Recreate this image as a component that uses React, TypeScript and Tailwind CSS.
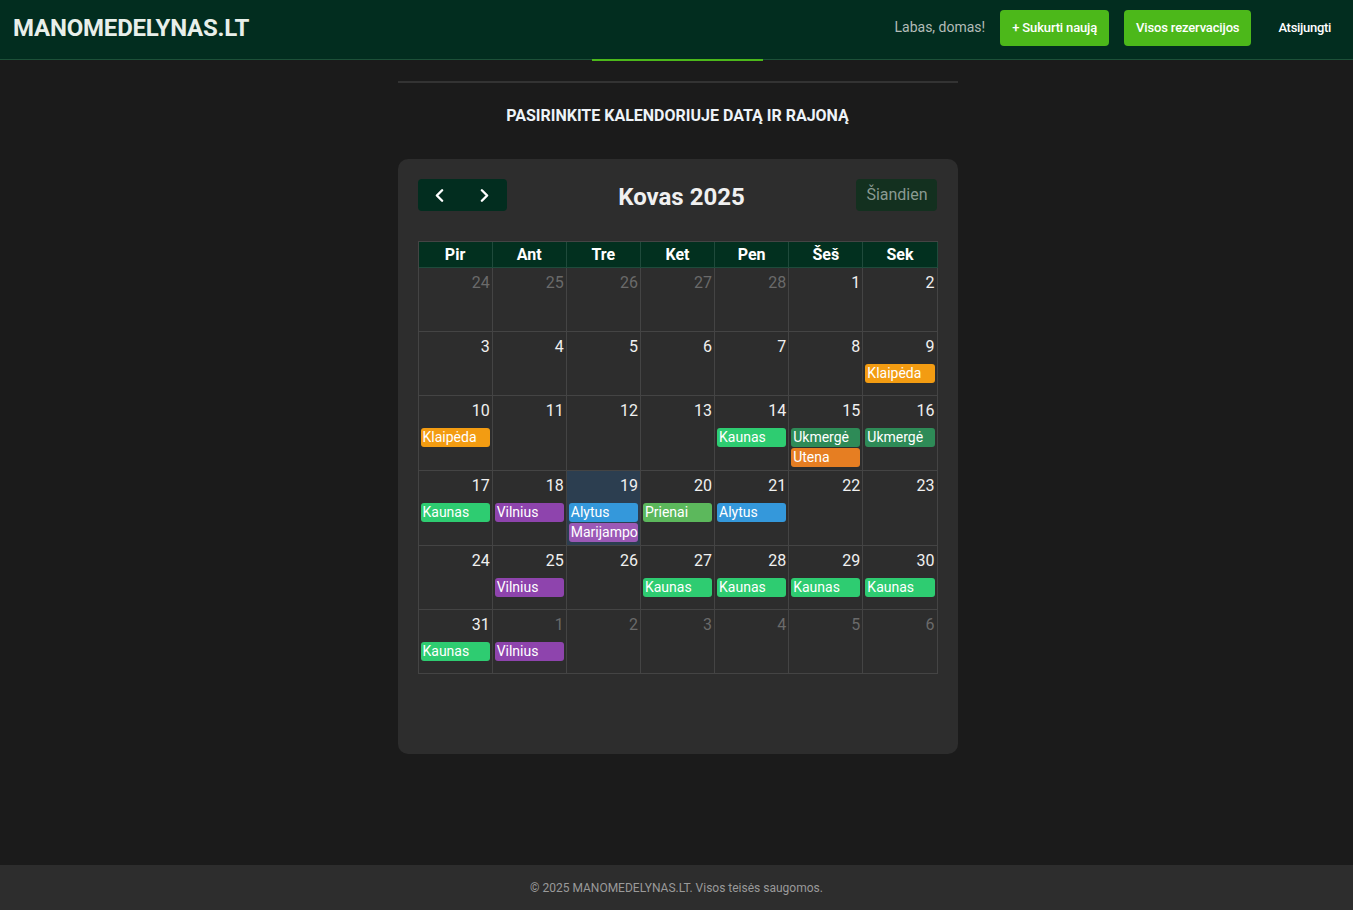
import { ChevronLeft, ChevronRight } from "lucide-react";

type Ev = { label: string; color: string };
type Day = { n: number; other?: boolean; today?: boolean; events?: Ev[] };

const KLAIPEDA = "bg-[#f39c12]";
const KAUNAS = "bg-[#2ecc71]";
const UKMERGE = "bg-[#2e8b57]";
const UTENA = "bg-[#e67e22]";
const VILNIUS = "bg-[#8e44ad]";
const ALYTUS = "bg-[#3498db]";
const PRIENAI = "bg-[#5cb85c]";
const MARIJAMPOLE = "bg-[#9b59b6]";

const weekdays = ["Pir", "Ant", "Tre", "Ket", "Pen", "Šeš", "Sek"];

const weeks: Day[][] = [
  [
    { n: 24, other: true },
    { n: 25, other: true },
    { n: 26, other: true },
    { n: 27, other: true },
    { n: 28, other: true },
    { n: 1 },
    { n: 2 },
  ],
  [
    { n: 3 },
    { n: 4 },
    { n: 5 },
    { n: 6 },
    { n: 7 },
    { n: 8 },
    { n: 9, events: [{ label: "Klaipėda", color: KLAIPEDA }] },
  ],
  [
    { n: 10, events: [{ label: "Klaipėda", color: KLAIPEDA }] },
    { n: 11 },
    { n: 12 },
    { n: 13 },
    { n: 14, events: [{ label: "Kaunas", color: KAUNAS }] },
    {
      n: 15,
      events: [
        { label: "Ukmergė", color: UKMERGE },
        { label: "Utena", color: UTENA },
      ],
    },
    { n: 16, events: [{ label: "Ukmergė", color: UKMERGE }] },
  ],
  [
    { n: 17, events: [{ label: "Kaunas", color: KAUNAS }] },
    { n: 18, events: [{ label: "Vilnius", color: VILNIUS }] },
    {
      n: 19,
      today: true,
      events: [
        { label: "Alytus", color: ALYTUS },
        { label: "Marijampolė", color: MARIJAMPOLE },
      ],
    },
    { n: 20, events: [{ label: "Prienai", color: PRIENAI }] },
    { n: 21, events: [{ label: "Alytus", color: ALYTUS }] },
    { n: 22 },
    { n: 23 },
  ],
  [
    { n: 24 },
    { n: 25, events: [{ label: "Vilnius", color: VILNIUS }] },
    { n: 26 },
    { n: 27, events: [{ label: "Kaunas", color: KAUNAS }] },
    { n: 28, events: [{ label: "Kaunas", color: KAUNAS }] },
    { n: 29, events: [{ label: "Kaunas", color: KAUNAS }] },
    { n: 30, events: [{ label: "Kaunas", color: KAUNAS }] },
  ],
  [
    { n: 31, events: [{ label: "Kaunas", color: KAUNAS }] },
    { n: 1, other: true, events: [{ label: "Vilnius", color: VILNIUS }] },
    { n: 2, other: true },
    { n: 3, other: true },
    { n: 4, other: true },
    { n: 5, other: true },
    { n: 6, other: true },
  ],
];

function DayCell({ day }: { day: Day }) {
  return (
    <div
      className={`min-h-[64px] border-r border-b border-[#444] pb-[3px] ${
        day.today ? "bg-[#2c3e50]" : ""
      }`}
    >
      <div
        className={`h-[32px] pt-[3px] pr-[2px] text-right text-[16px] leading-[24px] ${
          day.other ? "text-[#6a6a6a]" : "text-[#f0f0f0]"
        }`}
      >
        {day.n}
      </div>
      <div className="flex flex-col gap-px px-[2px]">
        {day.events?.map((ev, i) => (
          <div
            key={i}
            className={`${ev.color} h-[19px] overflow-hidden whitespace-nowrap rounded-[3px] pl-[2px] text-[14px] leading-[19px] text-white`}
          >
            {ev.label}
          </div>
        ))}
      </div>
    </div>
  );
}

export default function App() {
  return (
    <div className="flex min-h-[910px] flex-col bg-[#1b1b1b] font-['Roboto',sans-serif]">
      <header className="flex h-[60px] items-center justify-between border-b border-[#1d5038] bg-[#022d1f] pb-[4px] pl-[13px] pr-[22px]">
        <div className="text-[24px] font-bold tracking-[-0.2px] text-[#e8efea]">
          MANOMEDELYNAS.LT
        </div>
        <nav className="flex items-center">
          <span className="mr-[15px] text-[14px] text-[#b4bcb8]">
            Labas, domas!
          </span>
          <button className="h-[36px] rounded-[4px] bg-[#4cb81a] px-[12px] text-[13px] font-medium tracking-[-0.15px] text-white">
            + Sukurti naują
          </button>
          <button className="ml-[15px] h-[36px] rounded-[4px] bg-[#4cb81a] px-[12px] text-[13px] font-medium tracking-[-0.15px] text-white">
            Visos rezervacijos
          </button>
          <span className="ml-[27px] text-[13px] font-medium tracking-[-0.3px] text-white">
            Atsijungti
          </span>
        </nav>
      </header>

      <main className="mx-auto w-[560px] flex-1 translate-x-[1px]">
        <div className="mx-auto -mt-px h-[2px] w-[171px] bg-[#4cb81a]" />
        <div className="mt-[20px] h-[2px] bg-[#333]" />
        <h2 className="mt-[21px] text-center text-[16px] font-bold text-[#eef3f8]">
          PASIRINKITE KALENDORIUJE DATĄ IR RAJONĄ
        </h2>

        <section className="mt-[31px] rounded-[10px] bg-[#2d2d2d] px-[20px] pt-[20px] pb-[80px]">
          <div className="mb-[30px] flex h-[32px] items-center justify-between">
            <div className="flex h-[32px] w-[89px] items-center justify-around rounded-[4px] bg-[#022d1f] text-white">
              <ChevronLeft size={21} strokeWidth={2.8} />
              <ChevronRight size={21} strokeWidth={2.8} />
            </div>
            <h1 className="mt-[4px] text-[24px] font-bold text-[#f0f0f0]">
              Kovas 2025
            </h1>
            <button className="h-[32px] w-[81px] rounded-[4px] bg-[#13301f] text-[16px] text-[#8a9a92]">
              Šiandien
            </button>
          </div>

          <div className="border-t border-l border-[#444]">
            <div className="grid grid-cols-7 bg-[#02301f]">
              {weekdays.map((w) => (
                <div
                  key={w}
                  className="h-[26px] border-r border-b border-[#1f4a3b] text-center text-[16px] leading-[25px] font-bold text-white"
                >
                  {w}
                </div>
              ))}
            </div>
            {weeks.map((week, wi) => (
              <div key={wi} className="grid grid-cols-7">
                {week.map((day, di) => (
                  <DayCell key={di} day={day} />
                ))}
              </div>
            ))}
          </div>
        </section>
      </main>

      <footer className="flex h-[45px] items-center justify-center bg-[#2d2d2d] text-[12px] text-[#9a9a9a]">
        © 2025 MANOMEDELYNAS.LT. Visos teisės saugomos.
      </footer>
    </div>
  );
}
